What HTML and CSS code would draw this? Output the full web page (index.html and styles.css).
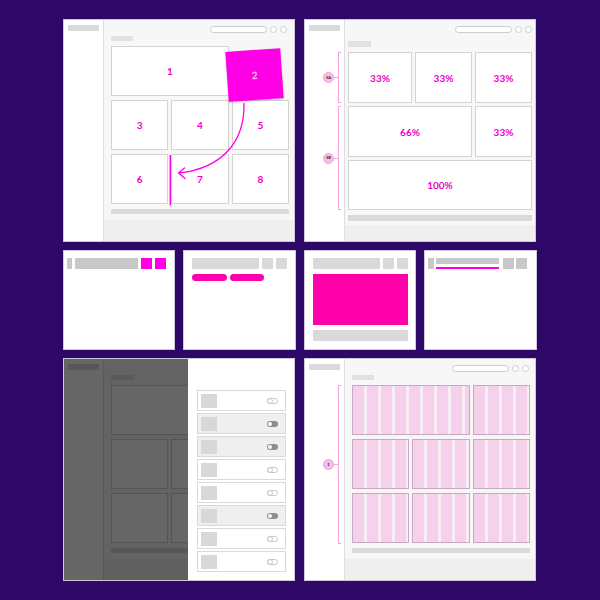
FILE: index.html
```html
<!DOCTYPE html>
<html>
<head>
<meta charset="utf-8">
<link rel="stylesheet" href="styles.css">
</head>
<body>
<div class="page">
  <div class="row row-big">
    <div class="panel panel-app">
      <div class="side"><div class="side-bar"></div></div>
      <div class="main">
        <div class="topbar"><div class="search"></div><div class="dot"></div><div class="dot"></div></div>
        <div class="heading"></div>
        <div class="grid">
          <div class="cell span2">1</div>
          <div class="slot"></div>
          <div class="cell">3</div>
          <div class="cell">4</div>
          <div class="cell">5</div>
          <div class="cell">6</div>
          <div class="cell">7</div>
          <div class="cell">8</div>
          <div class="dragged">2</div>
        </div>
        <div class="bottom-bar"></div>
        <div class="footer"></div>
      </div>
      <svg class="arrow" viewBox="0 0 232 223" width="232" height="223">
        <path d="M180 83 C 181 120, 160 148, 115 153" fill="none" stroke="#ff00e6" stroke-width="1.3"/>
        <path d="M120.5 148 L114.5 153 L121 158.5" fill="none" stroke="#ff00e6" stroke-width="1.3" stroke-linecap="round" stroke-linejoin="round"/>
        <line x1="106.3" y1="135" x2="106.3" y2="185.5" stroke="#ff00e6" stroke-width="1.4"/>
      </svg>
    </div>

    <div class="panel panel-app">
      <div class="side">
        <div class="side-bar"></div>
        <div class="notes notes-top">
          <div class="note note-5a"><span class="badge">5A</span><span class="tie"></span><span class="bracket"></span></div>
          <div class="note note-5b"><span class="badge">5B</span><span class="tie"></span><span class="bracket"></span></div>
        </div>
      </div>
      <div class="main main-wide">
        <div class="topbar"><div class="search"></div><div class="dot"></div><div class="dot"></div></div>
        <div class="heading"></div>
        <div class="grid grid-pct">
          <div class="cell">33%</div>
          <div class="cell">33%</div>
          <div class="cell">33%</div>
          <div class="cell span2">66%</div>
          <div class="cell">33%</div>
          <div class="cell span3">100%</div>
        </div>
        <div class="bottom-bar"></div>
        <div class="footer"></div>
      </div>
    </div>
  </div>

  <div class="row row-small">
    <div class="panel mini">
      <div class="mini-top">
        <span class="blk blk-tab dark"></span>
        <span class="blk blk-wide dark"></span>
        <span class="blk blk-sq magenta"></span>
        <span class="blk blk-sq magenta"></span>
      </div>
    </div>
    <div class="panel mini mini-pad">
      <div class="mini-top">
        <span class="blk blk-long light"></span>
        <span class="blk blk-sq light"></span>
        <span class="blk blk-sq light"></span>
      </div>
      <div class="pills"><span class="pill"></span><span class="pill pill-b"></span></div>
    </div>
    <div class="panel mini mini-pad">
      <div class="mini-top">
        <span class="blk blk-long light"></span>
        <span class="blk blk-sq light"></span>
        <span class="blk blk-sq light"></span>
      </div>
      <div class="hero"></div>
      <div class="hero-foot"></div>
    </div>
    <div class="panel mini">
      <div class="mini-top mini-top-tight">
        <span class="blk blk-tab6 dark"></span>
        <span class="tabcol"><span class="tabbar"></span><span class="tabline"></span></span>
        <span class="blk blk-sq dark sq-gap"></span>
        <span class="blk blk-sq dark"></span>
      </div>
    </div>
  </div>

  <div class="row row-big">
    <div class="panel panel-app">
      <div class="side"><div class="side-bar"></div></div>
      <div class="main">
        <div class="topbar"><div class="search"></div><div class="dot"></div><div class="dot"></div></div>
        <div class="heading"></div>
        <div class="grid">
          <div class="cell span2"></div>
          <div class="cell"></div>
          <div class="cell"></div>
          <div class="cell"></div>
          <div class="cell"></div>
          <div class="cell"></div>
          <div class="cell"></div>
          <div class="cell"></div>
        </div>
        <div class="bottom-bar"></div>
        <div class="footer"></div>
      </div>
      <div class="dim"></div>
      <div class="drawer">
        <div class="item"><span class="thumb"></span><svg class="toggle" viewBox="0 0 11 6" width="11" height="6"><rect x="0.5" y="0.5" width="10" height="5" rx="2.5" fill="#fff" stroke="#c9c9c9"/><circle cx="3" cy="3" r="2.5" fill="none" stroke="#c9c9c9"/></svg></div>
        <div class="item on"><span class="thumb"></span><svg class="toggle" viewBox="0 0 11 6" width="11" height="6"><rect x="0" y="0" width="11" height="6" rx="3" fill="#8e8e8e"/><circle cx="3" cy="3" r="2" fill="#fff"/></svg></div>
        <div class="item on"><span class="thumb"></span><svg class="toggle" viewBox="0 0 11 6" width="11" height="6"><rect x="0" y="0" width="11" height="6" rx="3" fill="#8e8e8e"/><circle cx="3" cy="3" r="2" fill="#fff"/></svg></div>
        <div class="item"><span class="thumb"></span><svg class="toggle" viewBox="0 0 11 6" width="11" height="6"><rect x="0.5" y="0.5" width="10" height="5" rx="2.5" fill="#fff" stroke="#c9c9c9"/><circle cx="3" cy="3" r="2.5" fill="none" stroke="#c9c9c9"/></svg></div>
        <div class="item"><span class="thumb"></span><svg class="toggle" viewBox="0 0 11 6" width="11" height="6"><rect x="0.5" y="0.5" width="10" height="5" rx="2.5" fill="#fff" stroke="#c9c9c9"/><circle cx="3" cy="3" r="2.5" fill="none" stroke="#c9c9c9"/></svg></div>
        <div class="item on"><span class="thumb"></span><svg class="toggle" viewBox="0 0 11 6" width="11" height="6"><rect x="0" y="0" width="11" height="6" rx="3" fill="#8e8e8e"/><circle cx="3" cy="3" r="2" fill="#fff"/></svg></div>
        <div class="item"><span class="thumb"></span><svg class="toggle" viewBox="0 0 11 6" width="11" height="6"><rect x="0.5" y="0.5" width="10" height="5" rx="2.5" fill="#fff" stroke="#c9c9c9"/><circle cx="3" cy="3" r="2.5" fill="none" stroke="#c9c9c9"/></svg></div>
        <div class="item"><span class="thumb"></span><svg class="toggle" viewBox="0 0 11 6" width="11" height="6"><rect x="0.5" y="0.5" width="10" height="5" rx="2.5" fill="#fff" stroke="#c9c9c9"/><circle cx="3" cy="3" r="2.5" fill="none" stroke="#c9c9c9"/></svg></div>
      </div>
    </div>

    <div class="panel panel-app">
      <div class="side">
        <div class="side-bar"></div>
        <div class="notes notes-cols">
          <div class="note note-1"><span class="badge">1</span><span class="tie"></span><span class="bracket"></span></div>
        </div>
      </div>
      <div class="main">
        <div class="topbar topbar-8"><div class="search"></div><div class="dot"></div><div class="dot"></div></div>
        <div class="heading"></div>
        <div class="grid grid-cols">
          <div class="cell pink span2"></div>
          <div class="cell pink"></div>
          <div class="cell pink"></div>
          <div class="cell pink"></div>
          <div class="cell pink"></div>
          <div class="cell pink"></div>
          <div class="cell pink"></div>
          <div class="cell pink"></div>
        </div>
        <div class="bottom-bar"></div>
        <div class="footer"></div>
      </div>
    </div>
  </div>
</div>
</body>
</html>
```

FILE: styles.css
```css
html, body {
  margin: 0;
  padding: 0;
}
body {
  width: 600px;
  height: 600px;
  background: #2d0867;
  font-family: "Lato", "Liberation Sans", sans-serif;
  overflow: hidden;
}
.page {
  box-sizing: border-box;
  padding: 19px 0 0 63px;
  display: flex;
  flex-direction: column;
  gap: 8px;
  width: 600px;
}
.row-big {
  display: grid;
  grid-template-columns: 232px 232px;
  column-gap: 9px;
  height: 223px;
}
.row-small {
  display: grid;
  grid-template-columns: 112px 113px 112px 113px;
  column-gap: 8px;
  height: 100px;
}
.panel {
  position: relative;
  box-sizing: border-box;
  border: 1px solid #cfc8dc;
  background: #fff;
  overflow: hidden;
}

/* app window */
.panel-app {
  display: flex;
}
.side {
  box-sizing: border-box;
  width: 40px;
  flex: 0 0 40px;
  border-right: 1px solid #dedede;
  background: #fff;
  padding: 5px 3px 0 4px;
  display: flex;
  flex-direction: column;
}
.side-bar {
  width: 31px;
  height: 6px;
  background: #dadada;
}
.main {
  flex: 1;
  background: #f7f7f7;
  display: flex;
  flex-direction: column;
}
.topbar {
  box-sizing: border-box;
  height: 16px;
  padding: 6px 7px 0 0;
  display: flex;
  justify-content: flex-end;
  align-items: flex-start;
  gap: 3px;
}
.topbar-8 {
  padding-right: 6px;
}
.main-wide .topbar {
  padding-right: 3px;
}
.search {
  box-sizing: border-box;
  width: 57px;
  height: 7px;
  border: 1px solid #cdcdcd;
  border-radius: 4px;
  background: #fff;
}
.dot {
  box-sizing: border-box;
  width: 7px;
  height: 7px;
  border: 1px solid #cdcdcd;
  border-radius: 50%;
  background: #fff;
}
.heading {
  width: 22px;
  height: 5px;
  background: #e1e1e1;
  margin: 0 0 5px 7px;
}
.grid {
  position: relative;
  margin: 0 5px 0 7px;
  height: 158px;
  display: grid;
  grid-template-columns: repeat(3, 1fr);
  grid-template-rows: repeat(3, 50px);
  gap: 4px 3px;
}
.cell {
  box-sizing: border-box;
  background: #fff;
  border: 1px solid #d3d3d3;
  display: flex;
  align-items: center;
  justify-content: center;
  font-size: 10px;
  font-weight: 700;
  color: #ee00c6;
}
.span2 { grid-column: span 2; }
.span3 { grid-column: span 3; }
.bottom-bar {
  height: 5px;
  margin: 5px 5px 0 7px;
  background: #dadada;
}
.footer {
  flex: 1;
  margin-top: 6px;
  background: #efefef;
}

/* panel 1 drag */
.dragged {
  position: absolute;
  left: 116px;
  top: 4px;
  width: 55px;
  height: 50px;
  background: #ff00e6;
  transform: rotate(-4deg);
  box-shadow: 0 1px 2px rgba(80, 0, 70, 0.25);
  display: flex;
  align-items: center;
  justify-content: center;
  font-size: 10px;
  font-weight: 700;
  color: #ffc4f3;
}
.arrow {
  position: absolute;
  left: 0;
  top: 0;
  pointer-events: none;
}

/* panel 2 */
.main-wide .heading {
  width: 23px;
  height: 6px;
  margin: 5px 0 5px 3px;
}
.main-wide .grid {
  margin: 0 3px;
  grid-template-columns: 64px 57px 57px;
  grid-template-rows: 51px 51px 50px;
  gap: 3px;
}
.main-wide .bottom-bar {
  height: 6px;
  margin: 5px 3px 0 3px;
}
.main-wide .footer {
  margin-top: 4px;
}

/* annotations */
.notes {
  display: flex;
  flex-direction: column;
  gap: 3px;
}
.notes-top { margin-top: 21px; }
.notes-cols { margin-top: 15px; }
.note {
  display: flex;
  align-items: center;
  justify-content: flex-end;
}
.note-5a { height: 51px; }
.note-5b { height: 104px; }
.note-1 { height: 159px; }
.badge {
  box-sizing: border-box;
  width: 11px;
  height: 11px;
  border-radius: 50%;
  background: #f8bde9;
  border: 1px solid #f59ddc;
  display: flex;
  align-items: center;
  justify-content: center;
  font-size: 4px;
  font-weight: 900;
  color: #3a2a3a;
  line-height: 1;
}
.tie {
  width: 4px;
  height: 1px;
  background: #f6a3df;
}
.bracket {
  box-sizing: border-box;
  width: 3px;
  height: 100%;
  border: 1px solid #f6a3df;
  border-right: none;
}

/* small panels */
.mini {
  padding: 7px 0 0 3px;
  display: flex;
  flex-direction: column;
}
.mini-pad {
  padding-left: 8px;
}
.mini-top {
  display: flex;
  gap: 3px;
  height: 11px;
}
.blk {
  display: block;
  height: 11px;
}
.dark { background: #c8c8c8; }
.light { background: #d9d9d9; }
.magenta { background: #ff00e6; }
.blk-tab { width: 5px; }
.blk-tab6 { width: 6px; }
.blk-wide { width: 63px; }
.blk-long { width: 67px; }
.blk-sq { width: 11px; }
.pills {
  display: flex;
  gap: 3px;
  margin-top: 5px;
}
.pill {
  width: 35px;
  height: 7px;
  border-radius: 4px;
  background: #ff00aa;
}
.pill-b { width: 34px; }
.hero {
  width: 95px;
  height: 51px;
  margin-top: 5px;
  background: #ff00aa;
}
.hero-foot {
  width: 95px;
  height: 11px;
  margin-top: 5px;
  background: #d9d9d9;
}
.mini-top-tight {
  gap: 2px;
}
.tabcol {
  display: flex;
  flex-direction: column;
  width: 63px;
}
.tabbar {
  height: 6px;
  background: #c8c8c8;
}
.tabline {
  height: 2px;
  margin-top: 3px;
  background: #ff00e6;
}
.sq-gap { margin-left: 2px; }

/* panel 7 */
.dim {
  position: absolute;
  inset: 0;
  background: rgba(0, 0, 0, 0.6);
}
.drawer {
  position: absolute;
  top: 0;
  right: 0;
  bottom: 0;
  width: 106px;
  box-sizing: border-box;
  background: #fff;
  padding: 31px 8px 0 9px;
  display: flex;
  flex-direction: column;
  gap: 2px;
}
.item {
  box-sizing: border-box;
  height: 21px;
  border: 1px solid #d9d9d9;
  background: #fff;
  display: flex;
  align-items: center;
  justify-content: space-between;
  padding: 0 7px 0 3px;
}
.item.on {
  background: #efefef;
}
.thumb {
  width: 16px;
  height: 14px;
  background: #d8d8d8;
}
.toggle {
  display: block;
}

/* panel 8 */
.pink {
  border-color: #c9a8c1;
  background-color: #f6d1ec;
  background-image: repeating-linear-gradient(90deg, #f6d1ec 0, #f6d1ec 11px, #f8eef5 11px, #f8eef5 14px);
}
```
